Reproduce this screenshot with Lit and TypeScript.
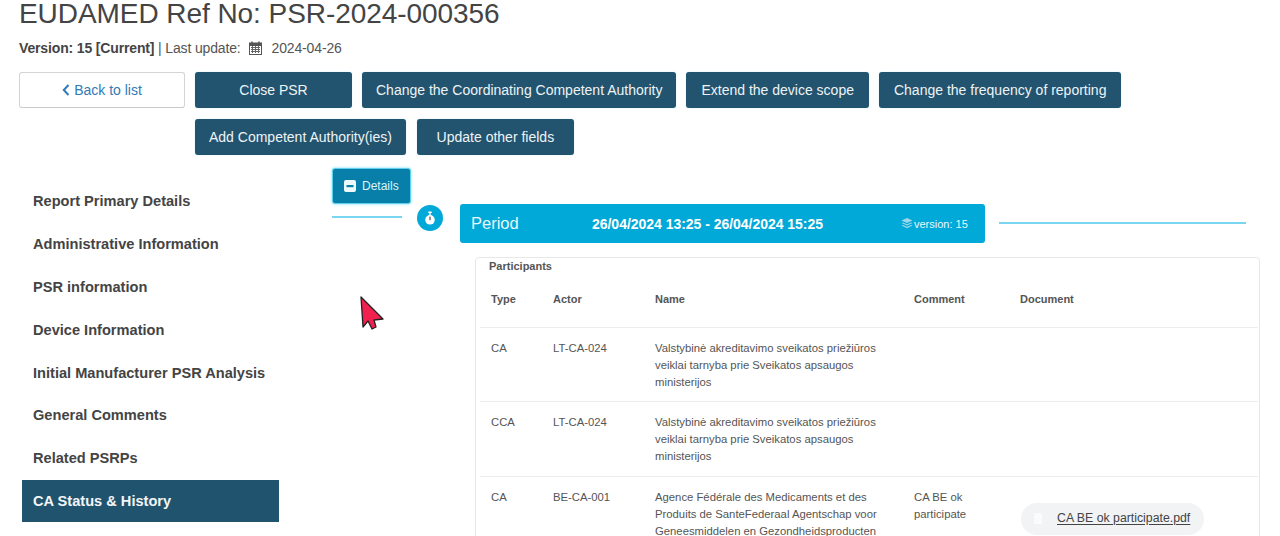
import { LitElement, html, css } from "lit";
import { customElement } from "lit/decorators.js";

const NAV = [
  "Report Primary Details",
  "Administrative Information",
  "PSR information",
  "Device Information",
  "Initial Manufacturer PSR Analysis",
  "General Comments",
  "Related PSRPs",
  "CA Status & History",
];
const LT = "Valstybinė akreditavimo sveikatos priežiūros veiklai tarnyba prie Sveikatos apsaugos ministerijos";
const ROWS = [
  { type: "CA", actor: "LT-CA-024", name: LT, comment: "", doc: "" },
  { type: "CCA", actor: "LT-CA-024", name: LT, comment: "", doc: "" },
  {
    type: "CA",
    actor: "BE-CA-001",
    name: "Agence Fédérale des Medicaments et des Produits de SanteFederaal Agentschap voor Geneesmiddelen en Gezondheidsproducten",
    comment: "CA BE ok participate",
    doc: "CA BE ok participate.pdf",
  },
];

@customElement("app-root")
export class AppRoot extends LitElement {
  static styles = css`
    :host {
      display: block;
      position: relative;
      height: 536px;
      overflow: hidden;
      background: #fff;
      color: #444;
      font-family: "Liberation Sans", Arial, sans-serif;
    }
    .head { padding: 0 0 0 19px; }
    h1 { margin: 0; font-size: 28px; line-height: 28px; font-weight: 400; color: #444; letter-spacing: -0.06px; }
    .meta {
      display: flex; align-items: center; height: 20px; margin-top: 10px;
      font-size: 14px; letter-spacing: -0.15px; color: #555;
    }
    .meta b { color: #444; }
    .meta svg { margin: 0 10px 0 8px; }
    .toolbar { display: flex; margin-top: 14px; }
    .back {
      flex: none; box-sizing: border-box; width: 166px; height: 36px; margin-right: 10px;
      display: flex; align-items: center; justify-content: center; gap: 4px;
      background: #fff; border: 1px solid #d4d4d4; border-bottom-color: #c9c9c9; border-radius: 3px;
      color: #337ab7; font-size: 14px;
    }
    .actions { display: flex; flex-wrap: wrap; gap: 11px 10px; }
    .btn {
      box-sizing: border-box; height: 36px; display: flex; align-items: center; justify-content: center;
      background: #22546f; border-radius: 3px; color: #eef3f6; font-size: 14px; padding: 0 15px;
      box-shadow: 0 0 1px #8fd5ee;
    }
    .btn.wide { min-width: 157px; }
    .btn.tight { padding: 0 14px; }
    .btn.mid { padding: 0 14px; margin-right: 1px; }
    .body { display: flex; margin-top: 13px; }
    nav { flex: none; width: 257px; margin: 12px 53px 0 22px; }
    .item {
      height: 42.8px; display: flex; align-items: center; padding-left: 11px;
      font-size: 14.6px; font-weight: 700; color: #444;
    }
    .item.active { background: #20536e; color: #f2f6f8; }
    main { flex: none; width: 928px; }
    .details {
      box-sizing: border-box; width: 79px; height: 36px; display: flex; align-items: center;
      gap: 6px; padding-left: 11px; background: #087fa8; border: 1px solid #5fd0ee; border-radius: 3px;
      box-shadow: 0 0 3px #7fdcf5; color: #d9f4fb; font-size: 12px;
    }
    .timeline { display: flex; align-items: flex-start; }
    .rule { height: 2px; background: #7ad6f0; }
    .rule.left { width: 70px; margin-top: 12px; }
    .clock {
      flex: none; width: 26px; height: 26px; margin: 1px 17px 0 15px; border-radius: 50%;
      background: #00a9d8; display: flex; align-items: center; justify-content: center;
    }
    .bar {
      flex: none; box-sizing: border-box; width: 525px; height: 39px; display: flex; align-items: center;
      padding: 0 16px 0 11px; background: #00a9d8; border-radius: 3px; color: #fff;
    }
    .bar .title { font-size: 16.5px; width: 121px; color: #e8f8fc; }
    .bar .range { font-size: 14px; font-weight: 700; width: 309px; letter-spacing: -0.03px; }
    .bar .ver { display: flex; align-items: center; gap: 1px; font-size: 11px; color: #e8f8fc; }
    .rule.right { width: 247px; margin: 18px 0 0 14px; }
    .card {
      box-sizing: border-box; width: 785px; margin: 14px 0 0 143px; height: 400px;
      border: 1px solid #e8e8e8; border-radius: 4px; padding: 0 1px 0 4px;
    }
    .card h2 { margin: 0; padding: 1px 0 0 9px; font-size: 11px; line-height: 14px; font-weight: 700; color: #555; }
    table { width: 100%; border-collapse: collapse; table-layout: fixed; font-size: 11.3px; color: #555; }
    .c1 { width: 62px; }
    .c2 { width: 102px; }
    .c3 { width: 259px; }
    .c4 { width: 106px; }
    th { height: 54px; box-sizing: border-box; padding: 0 0 1px 11px; text-align: left; font-size: 11px; font-weight: 700; border-bottom: 1px solid #ececec; vertical-align: middle; }
    td { padding: 12px 0 10.5px 11px; line-height: 17px; vertical-align: top; border-bottom: 1px solid #ececec; }
    td.doc { padding-left: 0; }
    .name { width: 228px; }
    .comment { width: 70px; }
    .pill {
      box-sizing: border-box; width: 183px; height: 32px; margin-top: 14px; margin-left: 12px;
      display: flex; align-items: center; gap: 15px; padding-left: 13px;
      background: #f1f3f5; border-radius: 16px; font-size: 12.3px; color: #444;
    }
    .pill i { width: 8px; height: 11px; background: #fafbfc; border-radius: 1px; }
    .pill u { text-underline-offset: 2px; }
    .cursor { position: absolute; left: 359px; top: 296px; }
  `;

  render() {
    return html`
      <div class="head">
        <h1>EUDAMED Ref No: PSR-2024-000356</h1>
        <div class="meta">
          <b>Version: 15 [Current]</b>&nbsp;| Last update:
          <svg width="13" height="14" viewBox="0 0 13 14">
            <rect x="0.5" y="2" width="12" height="11.5" fill="none" stroke="#555"></rect>
            <path d="M0 2h13v3H0z" fill="#555"></path>
            <path d="M3 0.5v3M10 0.5v3" stroke="#555" stroke-width="1.5"></path>
            <path d="M2 6.5h9M2 8.5h9M2 10.5h9M3.5 5v7M6.5 5v7M9.5 5v7" stroke="#666" stroke-width="1"></path>
          </svg>
          2024-04-26
        </div>
        <div class="toolbar">
          <div class="back">
            <svg width="8" height="12" viewBox="0 0 8 12"><path d="M6.5 1 1.8 6l4.7 5" fill="none" stroke="#337ab7" stroke-width="2"></path></svg>
            Back to list
          </div>
          <div class="actions">
            <div class="btn wide">Close PSR</div>
            <div class="btn tight">Change the Coordinating Competent Authority</div>
            <div class="btn">Extend the device scope</div>
            <div class="btn">Change the frequency of reporting</div>
            <div class="btn mid">Add Competent Authority(ies)</div>
            <div class="btn wide">Update other fields</div>
          </div>
        </div>
      </div>
      <div class="body">
        <nav>
          ${NAV.map((n, i) => html`<div class="item ${i === 7 ? "active" : ""}">${n}</div>`)}
        </nav>
        <main>
          <div class="details">
            <svg width="12" height="12" viewBox="0 0 12 12"><rect width="12" height="12" rx="2" fill="#eef9fc"></rect><rect x="2.5" y="5" width="7" height="2.2" fill="#087fa8"></rect></svg>
            Details
          </div>
          <div class="timeline">
            <div class="rule left"></div>
            <div class="clock">
              <svg width="10" height="14" viewBox="0 0 10 14">
                <circle cx="5" cy="8.8" r="4.8" fill="#fff"></circle>
                <rect x="3.2" y="0.4" width="3.6" height="1.5" rx="0.5" fill="#fff"></rect>
                <rect x="4.3" y="1.5" width="1.4" height="2.5" fill="#fff"></rect>
                <rect x="4.4" y="5.6" width="1.2" height="3.6" fill="#555"></rect>
              </svg>
            </div>
            <div class="bar">
              <span class="title">Period</span>
              <span class="range">26/04/2024 13:25 - 26/04/2024 15:25</span>
              <span class="ver">
                <svg width="12" height="11" viewBox="0 0 11 11" fill="#9fd6e8"><path d="M5.5 0 11 2.5 5.5 5 0 2.5z"></path><path d="M1.4 4.4 5.5 6.3l4.1-1.9L11 5 5.5 7.6 0 5z"></path><path d="M1.4 6.9 5.5 8.8l4.1-1.9L11 7.6 5.5 10.2 0 7.6z"></path></svg>
                version: 15
              </span>
            </div>
            <div class="rule right"></div>
          </div>
          <div class="card">
            <h2>Participants</h2>
            <table>
              <colgroup>
                <col class="c1" /><col class="c2" /><col class="c3" /><col class="c4" /><col />
              </colgroup>
              <thead><tr><th>Type</th><th>Actor</th><th>Name</th><th>Comment</th><th>Document</th></tr></thead>
              <tbody>
                ${ROWS.map(
                  (r) => html`<tr>
                    <td>${r.type}</td>
                    <td>${r.actor}</td>
                    <td><div class="name">${r.name}</div></td>
                    <td><div class="comment">${r.comment}</div></td>
                    <td class="doc">${r.doc ? html`<div class="pill"><i></i><u>${r.doc}</u></div>` : ""}</td>
                  </tr>`
                )}
              </tbody>
            </table>
          </div>
        </main>
      </div>
      <svg class="cursor" width="28" height="36" viewBox="0 0 28 36">
        <path d="M2 1 L24 23 L15 24 L17 31 L13 33 L9 25 L4 31 Z" fill="#f2204f" stroke="#222" stroke-width="1.3" stroke-linejoin="round"></path>
      </svg>
    `;
  }
}
